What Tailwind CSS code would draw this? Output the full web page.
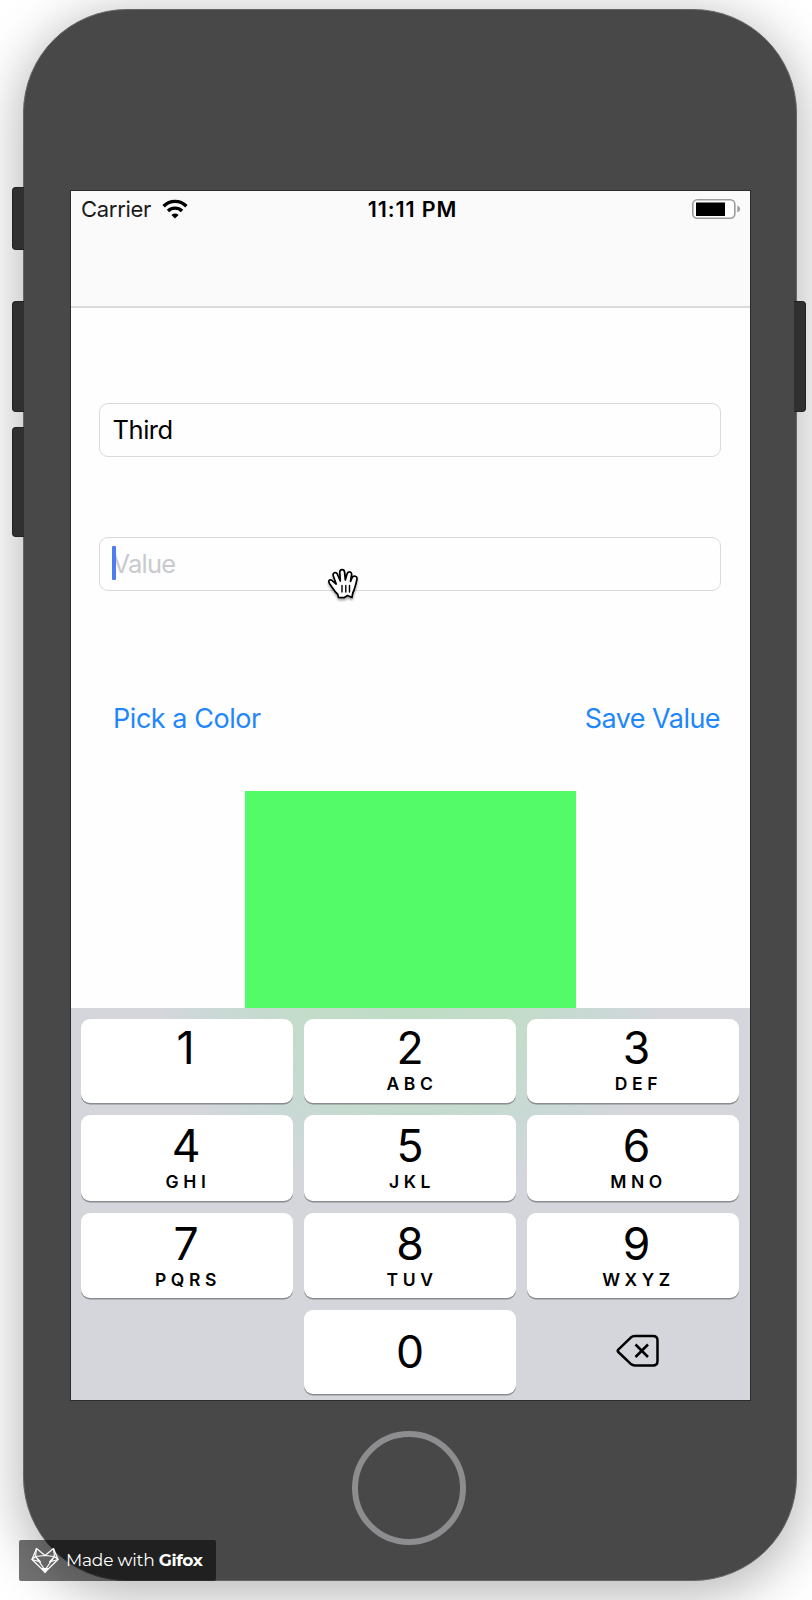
<!DOCTYPE html>
<html lang="en">
<head>
<meta charset="utf-8">
<title>Simulator</title>
<script src="https://cdn.jsdelivr.net/npm/@tailwindcss/browser@4"></script>
</head>
<body class="bg-white">
<div class="relative w-[812px] h-[1600px] overflow-hidden pt-[9px] pl-[23px] font-['Inter',sans-serif] text-black">
  <!-- phone body -->
  <div class="w-[774px] h-[1572px] rounded-[104px] bg-[#484848] border border-[#666] pt-[180px] pl-[46px] shadow-[0_10px_50px_6px_rgba(0,0,0,0.27)]">
    <!-- screen -->
    <div class="w-[681px] h-[1211px] border border-[#2c2c2c] bg-[#fefefe] flex flex-col">
      <header class="h-[117px] shrink-0 bg-[#fafafa] border-b-2 border-[#d9dadc] pl-[10px] pr-[9px] pt-[4px]">
        <div class="grid grid-cols-[220px_1fr_220px] h-[28px] items-center">
          <div class="flex items-center">
            <span class="text-[22px] tracking-[-0.300px] leading-7 text-[#1a1a1a]">Carrier</span>
            <svg class="ml-[11px] w-[26px] h-[20px]" viewBox="0 0 26 20" fill="none" stroke="#000">
              <path d="M1.600 7.200C8 .8 18 .8 24.400 7.200" stroke-width="3.400"/>
              <path d="M6 12C10 8.200 16 8.200 20 12" stroke-width="3.400"/>
              <path d="M13 19.500L9.400 15.900Q13 13 16.600 15.900Z" fill="#000" stroke="none"/>
            </svg>
          </div>
          <span class="text-center whitespace-nowrap text-[21.500px] font-semibold tracking-[0.900px] pl-[3px] leading-7">11:11 PM</span>
          <div class="flex justify-end">
            <svg class="w-[50px] h-[22px]" viewBox="0 0 50 22">
              <rect x="1.800" y="1.700" width="42" height="18.600" rx="4.500" fill="#fff" stroke="#9b9c9e" stroke-width="1.600"/>
              <rect x="5" y="4.500" width="29" height="13.500" fill="#000"/>
              <path d="M46.300 7.500Q49.200 8.500 49.200 11T46.300 14.500Z" fill="#9b9c9e"/>
            </svg>
          </div>
        </div>
      </header>
      <main class="h-[700px] shrink-0 pt-[95px] flex flex-col">
        <div class="ml-[28px] mr-[29px] h-[54px] rounded-[9px] border border-[#d9dadd] flex items-center pl-[12.500px] text-[25.500px] tracking-[-0.450px]"><span>Third</span></div>
        <div class="ml-[28px] mr-[29px] mt-[80px] h-[54px] rounded-[9px] border border-[#d9dadd] flex items-center pl-[12.500px] text-[25.500px]">
          <span class="text-[#c9cacd] tracking-[-0.750px]">Value</span>
          <span class="absolute left-[112px] top-[546px] w-[4px] h-[34px] rounded-[1px] bg-[#4f7df0]"></span>
        </div>
        <div class="mt-[110px] h-[36px] pl-[42px] pr-[30px] flex justify-between items-center text-[27px] text-[#1f87fb]">
          <span class="tracking-[-0.450px]">Pick a Color</span><span class="tracking-[-0.550px]">Save Value</span>
        </div>
        <div class="mt-[54px] ml-[174px] w-[331px] flex-1 bg-[#53fb69]"></div>
      </main>
      <!-- number pad -->
      <section class="flex-1 bg-[#d4d6db] bg-[radial-gradient(ellipse_250px_190px_at_50%_0%,#bfdcc6_0%,#c4dccb_45%,#c9d9d6_75%,#d4d6db_100%)] pt-[11px] pl-[10px] pr-[11px]">
        <div class="grid grid-cols-3 gap-x-[11px] gap-y-[12px] grid-rows-[84px_86px_85px_84px] text-center">
          <div class="rounded-[9px] bg-white shadow-[0_1.500px_0_#898c90] pr-[3px] pt-px"><p class="text-[44.500px] leading-[57px]">1</p></div>
          <div class="rounded-[9px] bg-white shadow-[0_1.500px_0_#898c90] pt-px"><p class="text-[44.500px] leading-[57px]">2</p><p class="-mt-[5px] text-[17.500px] leading-6 font-semibold tracking-[4.600px] pl-1">ABC</p></div>
          <div class="rounded-[9px] bg-white shadow-[0_1.500px_0_#898c90] pl-[7px] pt-px"><p class="text-[44.500px] leading-[57px]">3</p><p class="-mt-[5px] text-[17.500px] leading-6 font-semibold tracking-[4.600px] pl-1">DEF</p></div>
          <div class="rounded-[9px] bg-white shadow-[0_1.500px_0_#898c90] pr-[2px] pt-[2px]"><p class="text-[44.500px] leading-[58px]">4</p><p class="-mt-[5px] text-[17.500px] leading-6 font-semibold tracking-[4.600px] pl-1">GHI</p></div>
          <div class="rounded-[9px] bg-white shadow-[0_1.500px_0_#898c90] pt-[2px]"><p class="text-[44.500px] leading-[58px]">5</p><p class="-mt-[5px] text-[17.500px] leading-6 font-semibold tracking-[4.600px] pl-1">JKL</p></div>
          <div class="rounded-[9px] bg-white shadow-[0_1.500px_0_#898c90] pl-[7px] pt-[2px]"><p class="text-[44.500px] leading-[58px]">6</p><p class="-mt-[5px] text-[17.500px] leading-6 font-semibold tracking-[4.600px] pl-1">MNO</p></div>
          <div class="rounded-[9px] bg-white shadow-[0_1.500px_0_#898c90] pr-[2px] pt-[2px]"><p class="text-[44.500px] leading-[58px]">7</p><p class="-mt-[5px] text-[17.500px] leading-6 font-semibold tracking-[4.600px] pl-1">PQRS</p></div>
          <div class="rounded-[9px] bg-white shadow-[0_1.500px_0_#898c90] pt-[2px]"><p class="text-[44.500px] leading-[58px]">8</p><p class="-mt-[5px] text-[17.500px] leading-6 font-semibold tracking-[4.600px] pl-1">TUV</p></div>
          <div class="rounded-[9px] bg-white shadow-[0_1.500px_0_#898c90] pl-[7px] pt-[2px]"><p class="text-[44.500px] leading-[58px]">9</p><p class="-mt-[5px] text-[17.500px] leading-6 font-semibold tracking-[4.600px] pl-1">WXYZ</p></div>
          <div></div>
          <div class="rounded-[9px] bg-white shadow-[0_1.500px_0_#898c90]"><p class="text-[44.500px] leading-[84px]">0</p></div>
          <div class="flex justify-center items-center pl-[9px] pb-[3px]">
            <svg class="w-[44px] h-[34px]" viewBox="0 0 44 34" fill="none" stroke="#000" stroke-width="2.500" stroke-linejoin="round">
              <path d="M2.300 15.700L14.500 3.800Q16.500 2 19 2H37Q41.500 2 41.500 6.500V27Q41.500 31.500 37 31.500H19Q16.500 31.500 14.500 29.700L2.300 18Q1.200 16.900 2.300 15.700Z"/>
              <path d="M19.500 10.500L32 23M32 10.500L19.500 23"/>
            </svg>
          </div>
        </div>
      </section>
    </div>
    <!-- home button -->
    <div class="mt-[30px] ml-[282px] w-[114px] h-[114px] rounded-full border-[6px] border-[#8d8d8f]"></div>
  </div>

  <!-- hardware buttons -->
  <div class="absolute left-[12px] top-[187px] w-[12px] h-[63px] rounded-l-[4px] bg-[#303030] border border-r-0 border-[#222]"></div>
  <div class="absolute left-[12px] top-[301px] w-[12px] h-[111px] rounded-l-[4px] bg-[#303030] border border-r-0 border-[#222]"></div>
  <div class="absolute left-[12px] top-[427px] w-[12px] h-[110px] rounded-l-[4px] bg-[#303030] border border-r-0 border-[#222]"></div>
  <div class="absolute left-[794px] top-[301px] w-[12px] h-[111px] rounded-r-[4px] bg-[#303030] border border-l-0 border-[#222]"></div>

  <!-- open hand pointer -->
  <svg class="absolute left-[326px] top-[566px] w-[34px] h-[36px] drop-shadow-[0_2px_1px_rgba(0,0,0,0.35)]" viewBox="0 0 34 36" fill="#fff" stroke="#000" stroke-width="1.700" stroke-linejoin="round" stroke-linecap="round">
    <path d="M12.500 31.500L11.800 28.500C8 25 6 21 3.500 17.500C1.500 14 4.500 12.700 7 15.300L10.200 18L7.500 10.500C6 6.500 10 5 11.500 8.500L14.300 15L13.800 6.500C13.600 2.700 18.200 2.500 18.600 6.200L19.300 14L21 8C22.200 4.500 26.300 5.700 25.500 9.200L24.500 15.500L26 12C27.500 8.800 31.700 10 30.900 13.500C29.700 19 28.800 23 26.800 27L26 31.500L21.500 29.500L18 31.700Z"/>
    <path d="M16 19.500V26M19.800 19.500V26M23.500 19.500V26" fill="none" stroke-width="1.400"/>
  </svg>

  <!-- watermark -->
  <div class="absolute left-[19px] top-[1540px] w-[197px] h-[41px] rounded-[2px] bg-black/55 flex items-center pl-[12px] text-white">
    <svg class="w-[28px] h-[27px] mr-[7px] shrink-0" viewBox="0 0 28 27" fill="none" stroke="#fff" stroke-width="1.200" stroke-linejoin="round">
      <path d="M5.500 1.500L1 12.500L14 25L27 12.500L22.500 1.500L14 8.500Z"/>
      <path d="M5.500 1.500L4.500 9.500L14 8.500L23.500 9.500L22.500 1.500M4.500 9.500L1 12.500L9.500 15L4.500 9.500L14 23L23.500 9.500L18.500 15L27 12.500L23.500 9.500"/>
      <path d="M11 21.500H17L14 25.500Z" fill="#fff"/>
    </svg>
    <span class="text-[17px] whitespace-nowrap tracking-[-0.200px] font-['Montserrat','Inter',sans-serif]">Made with <b class="font-bold tracking-[-0.400px]">Gifox</b></span>
  </div>
</div>
</body>
</html>
